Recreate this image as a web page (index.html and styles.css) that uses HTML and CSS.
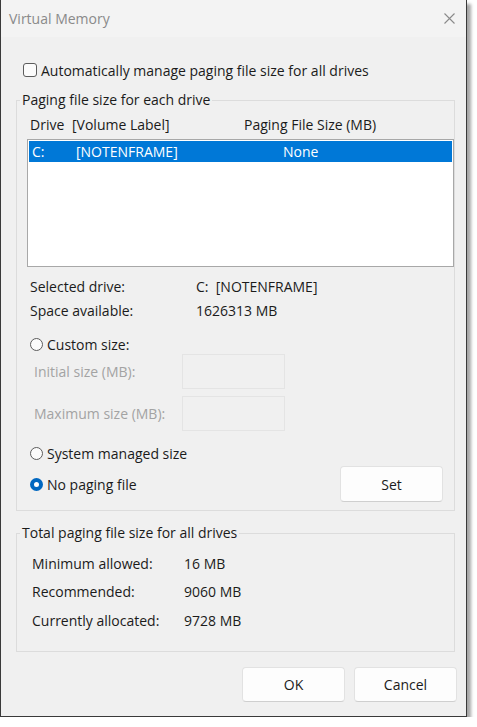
FILE: index.html
```html
<!DOCTYPE html>
<html>
<head>
<meta charset="utf-8">
<link rel="stylesheet" href="styles.css">
</head>
<body>
<div class="window">
  <div class="titlebar">
    <span class="title">Virtual Memory</span>
    <svg class="close" width="11" height="11" viewBox="0 0 11 11"><path d="M0.5 0.5L10.5 10.5M10.5 0.5L0.5 10.5" stroke="#8a8a8a" stroke-width="1.1" fill="none"/></svg>
  </div>
  <div class="content">
    <label class="check-row"><span class="checkbox"></span><span>Automatically manage paging file size for all drives</span></label>

    <fieldset class="group group1">
      <legend>Paging file size for each drive</legend>
      <div class="list-header">
        <span class="col-drive">Drive</span>
        <span class="col-label">[Volume Label]</span>
        <span class="col-size">Paging File Size (MB)</span>
      </div>
      <div class="listbox">
        <div class="list-row selected">
          <span class="r-drive">C:</span>
          <span class="r-label">[NOTENFRAME]</span>
          <span class="r-size">None</span>
        </div>
      </div>
      <div class="info">
        <span>Selected drive:</span><span>C:&nbsp; [NOTENFRAME]</span>
        <span>Space available:</span><span>1626313 MB</span>
      </div>
      <div class="radio-row custom"><span class="radio"></span><span>Custom size:</span></div>
      <div class="size-row first"><span class="disabled">Initial size (MB):</span><span class="textbox"></span></div>
      <div class="size-row"><span class="disabled">Maximum size (MB):</span><span class="textbox"></span></div>
      <div class="radio-row system"><span class="radio"></span><span>System managed size</span></div>
      <div class="radio-row nopaging">
        <span class="radio checked"></span><span class="grow">No paging file</span>
        <button class="btn set">Set</button>
      </div>
    </fieldset>

    <fieldset class="group group2">
      <legend>Total paging file size for all drives</legend>
      <div class="totals">
        <span>Minimum allowed:</span><span>16 MB</span>
        <span>Recommended:</span><span>9060 MB</span>
        <span>Currently allocated:</span><span>9728 MB</span>
      </div>
    </fieldset>

    <div class="footer">
      <button class="btn">OK</button>
      <button class="btn">Cancel</button>
    </div>
  </div>
</div>
</body>
</html>
```
FILE: styles.css
```css
* { box-sizing: border-box; }
html, body { margin: 0; padding: 0; background: #ffffff; }
body {
  font-family: "Open Sans", "Noto Sans", sans-serif;
  font-size: 14px;
  color: #1b1b1b;
}
.window {
  width: 467px;
  height: 717px;
  background: #f0f0f0;
  border-left: 1px solid #3a3a3a;
  border-right: 1px solid #3a3a3a;
  border-bottom: 1px solid #3a3a3a;
  box-shadow: 4px 4px 3px rgba(0,0,0,0.35);
  display: flex;
  flex-direction: column;
}
.titlebar {
  height: 37px;
  background: #f3f3f3;
  display: flex;
  align-items: center;
  justify-content: space-between;
  padding: 0 11px 0 8px;
}
.title { color: #8a8a8a; font-size: 14px; }
.close { display: block; }
.content {
  padding: 0 11px 0 15px;
  display: flex;
  flex-direction: column;
}
.check-row {
  margin-top: 22px;
  height: 22px;
  display: flex;
  align-items: center;
  padding-left: 7px;
}
.checkbox {
  width: 14px; height: 14px;
  border: 1px solid #5c5c5c;
  border-radius: 3px;
  background: #fbfbfb;
  margin-right: 4px;
}
.group {
  margin: 0;
  border: 1px solid #dcdcdc;
  padding: 0 0 0 10px;
  min-width: 0;
}
.group legend {
  padding: 0 2px;
  margin-left: -7px;
  line-height: 20px;
  height: 20px;
}
.group1 { margin-top: 9px; height: 421px; }
.list-header {
  height: 29px;
  display: flex;
  align-items: center;
  padding-left: 3px;
}
.col-drive { width: 42px; }
.col-label { width: 172px; }
.listbox {
  height: 128px;
  border: 1px solid #a8a8a8;
  background: #fff;
  padding: 1px;
}
.list-row {
  height: 21px;
  display: flex;
  align-items: center;
  padding-left: 3px;
}
.list-row.selected { background: #0078d7; color: #fff; }
.r-drive { width: 44px; }
.r-label { width: 207px; }
.info {
  display: grid;
  grid-template-columns: 166px auto;
  grid-auto-rows: 24px;
  align-items: center;
  margin-top: 7px;
  padding-left: 3px;
}
.radio-row {
  display: flex;
  align-items: center;
  height: 24px;
  padding-left: 3px;
}
.radio {
  width: 13px; height: 13px;
  border: 1px solid #5c5c5c;
  border-radius: 50%;
  background: #fbfbfb;
  margin-right: 4px;
  flex: none;
}
.radio.checked {
  border: 4px solid #0067c0;
  background: #fff;
}
.custom { margin-top: 10px; }
.size-row {
  display: flex;
  align-items: center;
  height: 35px;
  padding-left: 7px;
  margin-top: 7px;
}
.size-row.first { margin-top: -2px; }
.size-row .disabled { width: 148px; color: #a3a3a3; }
.textbox {
  width: 103px; height: 35px;
  border: 1px solid #e4e4e4;
  background: #f0f0f0;
}
.system { margin-top: 10px; }
.nopaging { margin-top: 1px; height: 36px; padding-right: 11px; }
.grow { flex: 1; }
.btn {
  font-family: inherit;
  font-size: 14px;
  color: #1b1b1b;
  background: #fdfdfd;
  border: 1px solid #e2e2e2;
  border-bottom-color: #cfcfcf;
  border-radius: 4px;
  width: 103px;
  height: 36px;
  padding: 0;
}
.nopaging .btn { height: 36px; }
.group2 { margin-top: 12px; height: 129px; }
.totals {
  display: grid;
  grid-template-columns: 152px auto;
  grid-auto-rows: 28.5px;
  align-items: center;
  margin-top: 6px;
  padding-left: 5px;
}
.footer {
  display: flex;
  justify-content: flex-end;
  gap: 9px;
  margin-top: 15px;
  margin-right: -2px;
}
.footer .btn { height: 35px; }
```
